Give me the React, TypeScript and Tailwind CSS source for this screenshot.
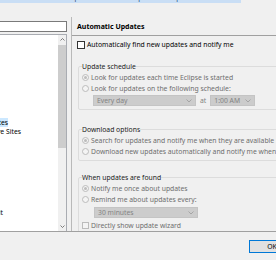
import React from "react";

function Chevron({ color = "#8a8a8a" }: { color?: string }) {
  return (
    <svg width="6" height="4" viewBox="0 0 6 4" className="shrink-0">
      <polyline points="0.5,0.5 3,3 5.5,0.5" fill="none" stroke={color} strokeWidth="0.8" />
    </svg>
  );
}

function Radio({ checked }: { checked?: boolean }) {
  return (
    <span className="w-[7px] h-[7px] rounded-full border border-[#bcbcbc] bg-[#f4f4f4] flex items-center justify-center shrink-0">
      {checked ? <span className="w-[3px] h-[3px] rounded-full bg-[#bcbcbc]" /> : null}
    </span>
  );
}

function RadioRow({ checked, label }: { checked?: boolean; label: string }) {
  return (
    <div className="h-[11px] flex items-center gap-[1px] whitespace-nowrap text-[#6d6d6d]">
      <Radio checked={checked} />
      <span className="ml-[1px]">{label}</span>
    </div>
  );
}

function Combo({ label, w }: { label: string; w: string }) {
  return (
    <div className={`${w} h-[11px] bg-[#cccccc] border border-[#c4c4c4] flex items-center pl-[3px] pr-[3px] text-[#838383] whitespace-nowrap`}>
      <span className="flex-1">{label}</span>
      <Chevron color="#9a9a9a" />
    </div>
  );
}

export default function App() {
  return (
    <div className="w-[276px] h-[260px] overflow-hidden bg-[#f0f0f0] flex flex-col font-['Noto_Sans',sans-serif] text-[6.8px] leading-[11px] text-black">
      {/* top strip */}
      <div className="h-[3px] shrink-0 overflow-hidden">
        <div className="w-[241px] h-[3px] bg-[#c9def5] overflow-hidden">
          <div className="mt-[-8px] pl-[4px] whitespace-nowrap text-[#20426f]">
            Preferences - Install/Update - Automatic Updates - Eclipse IDE
          </div>
        </div>
      </div>

      {/* main */}
      <div className="h-[228px] shrink-0 flex">
        {/* left column */}
        <div className="w-[67px] shrink-0 flex flex-col pt-[18px]">
          <div className="h-[11px] shrink-0 bg-white border-y border-r border-[#7a7a7a]" />
          <div className="mt-[2px] flex-1 bg-white border-t border-r border-[#a9acb2] flex overflow-hidden">
            <div className="flex-1 overflow-hidden flex flex-col">
              <div className="mt-[82px] h-[10px] flex justify-end w-[8px] leading-[10px]">
                <span className="whitespace-nowrap shrink-0 bg-[#cce8ff] h-[9px] leading-[9px] mt-[1px]">Automatic Updates</span>
              </div>
              <div className="h-[10px] flex justify-end w-[21px] leading-[10px]">
                <span className="whitespace-nowrap shrink-0">Available Software Sites</span>
              </div>
              <div className="mt-[71px] h-[10px] flex justify-end w-[3px] leading-[10px]">
                <span className="whitespace-nowrap shrink-0">Toolkit</span>
              </div>
            </div>
            <div className="w-[8px] shrink-0 flex flex-col bg-[#f0f0f0]">
              <div className="h-[9px] flex items-center justify-center">
                <svg width="5" height="3" viewBox="0 0 5 3">
                  <polyline points="0.5,2.5 2.5,0.5 4.5,2.5" fill="none" stroke="#606060" strokeWidth="0.8" />
                </svg>
              </div>
              <div className="mt-[1px] h-[103px] bg-[#cdcdcd]" />
              <div className="flex-1" />
              <div className="h-[9px] flex items-center justify-center">
                <svg width="5" height="3" viewBox="0 0 5 3">
                  <polyline points="0.5,0.5 2.5,2.5 4.5,0.5" fill="none" stroke="#606060" strokeWidth="0.8" />
                </svg>
              </div>
            </div>
          </div>
        </div>

        <div className="w-[4px] shrink-0" />

        {/* right panel */}
        <div className="w-[240px] shrink-0 mt-[14px] border-l border-[#b9b9b9] overflow-hidden flex flex-col">
          <div className="h-[19px] shrink-0 border-b border-[#a0a0a0] flex items-center pl-[5px] pt-[1px] font-bold text-[7px] whitespace-nowrap">
            Automatic Updates
          </div>

          <div className="mt-[3px] h-[11px] pl-[5px] flex items-center whitespace-nowrap">
            <span className="w-[8px] h-[8px] border border-[#333333] bg-white shrink-0" />
            <span className="ml-[2px]">Automatically find new updates and notify me</span>
          </div>

          <fieldset className="mt-[11px] ml-[6px] w-[230px] border border-[#dcdcdc] rounded-[2px] px-[3px] pb-[3px]">
            <legend className="leading-[11px] whitespace-nowrap text-[#1a1a1a]">Update schedule</legend>
            <RadioRow checked label="Look for updates each time Eclipse is started" />
            <RadioRow label="Look for updates on the following schedule:" />
            <div className="mt-[1px] flex items-center text-[#838383] whitespace-nowrap">
              <div className="ml-[11px]">
                <Combo label="Every day" w="w-[103px]" />
              </div>
              <span className="ml-[4px]">at</span>
              <div className="ml-[4px]">
                <Combo label="1:00 AM" w="w-[45px]" />
              </div>
            </div>
          </fieldset>

          <fieldset className="mt-[14px] ml-[6px] w-[230px] border border-[#dcdcdc] rounded-[2px] px-[3px] pb-[3px]">
            <legend className="leading-[11px] whitespace-nowrap text-[#1a1a1a]">Download options</legend>
            <RadioRow checked label="Search for updates and notify me when they are available" />
            <RadioRow label="Download new updates automatically and notify me when ready to install them" />
          </fieldset>

          <fieldset className="mt-[11px] ml-[6px] w-[230px] border border-[#dcdcdc] rounded-[2px] px-[3px] pb-[3px]">
            <legend className="leading-[11px] whitespace-nowrap text-[#1a1a1a]">When updates are found</legend>
            <RadioRow checked label="Notify me once about updates" />
            <RadioRow label="Remind me about updates every:" />
            <div className="mt-[2px] ml-[12px]">
              <Combo label="30 minutes" w="w-[104px]" />
            </div>
            <div className="mt-[2px] h-[11px] flex items-center whitespace-nowrap text-[#6d6d6d]">
              <span className="w-[7px] h-[7px] border border-[#bcbcbc] bg-[#f4f4f4] shrink-0" />
              <span className="ml-[2px]">Directly show update wizard</span>
            </div>
          </fieldset>
        </div>
      </div>

      {/* bottom bar */}
      <div className="flex-1 border-t border-[#a0a0a0] flex justify-end items-start pt-[8px]">
        <div className="ml-auto w-[300px] flex justify-end">
          <div className="w-[46px] h-[13px] shrink-0 border border-[#0078d7] bg-[#e1e1e1] flex items-center justify-center mr-[-19px]">
            OK
          </div>
        </div>
      </div>
    </div>
  );
}
